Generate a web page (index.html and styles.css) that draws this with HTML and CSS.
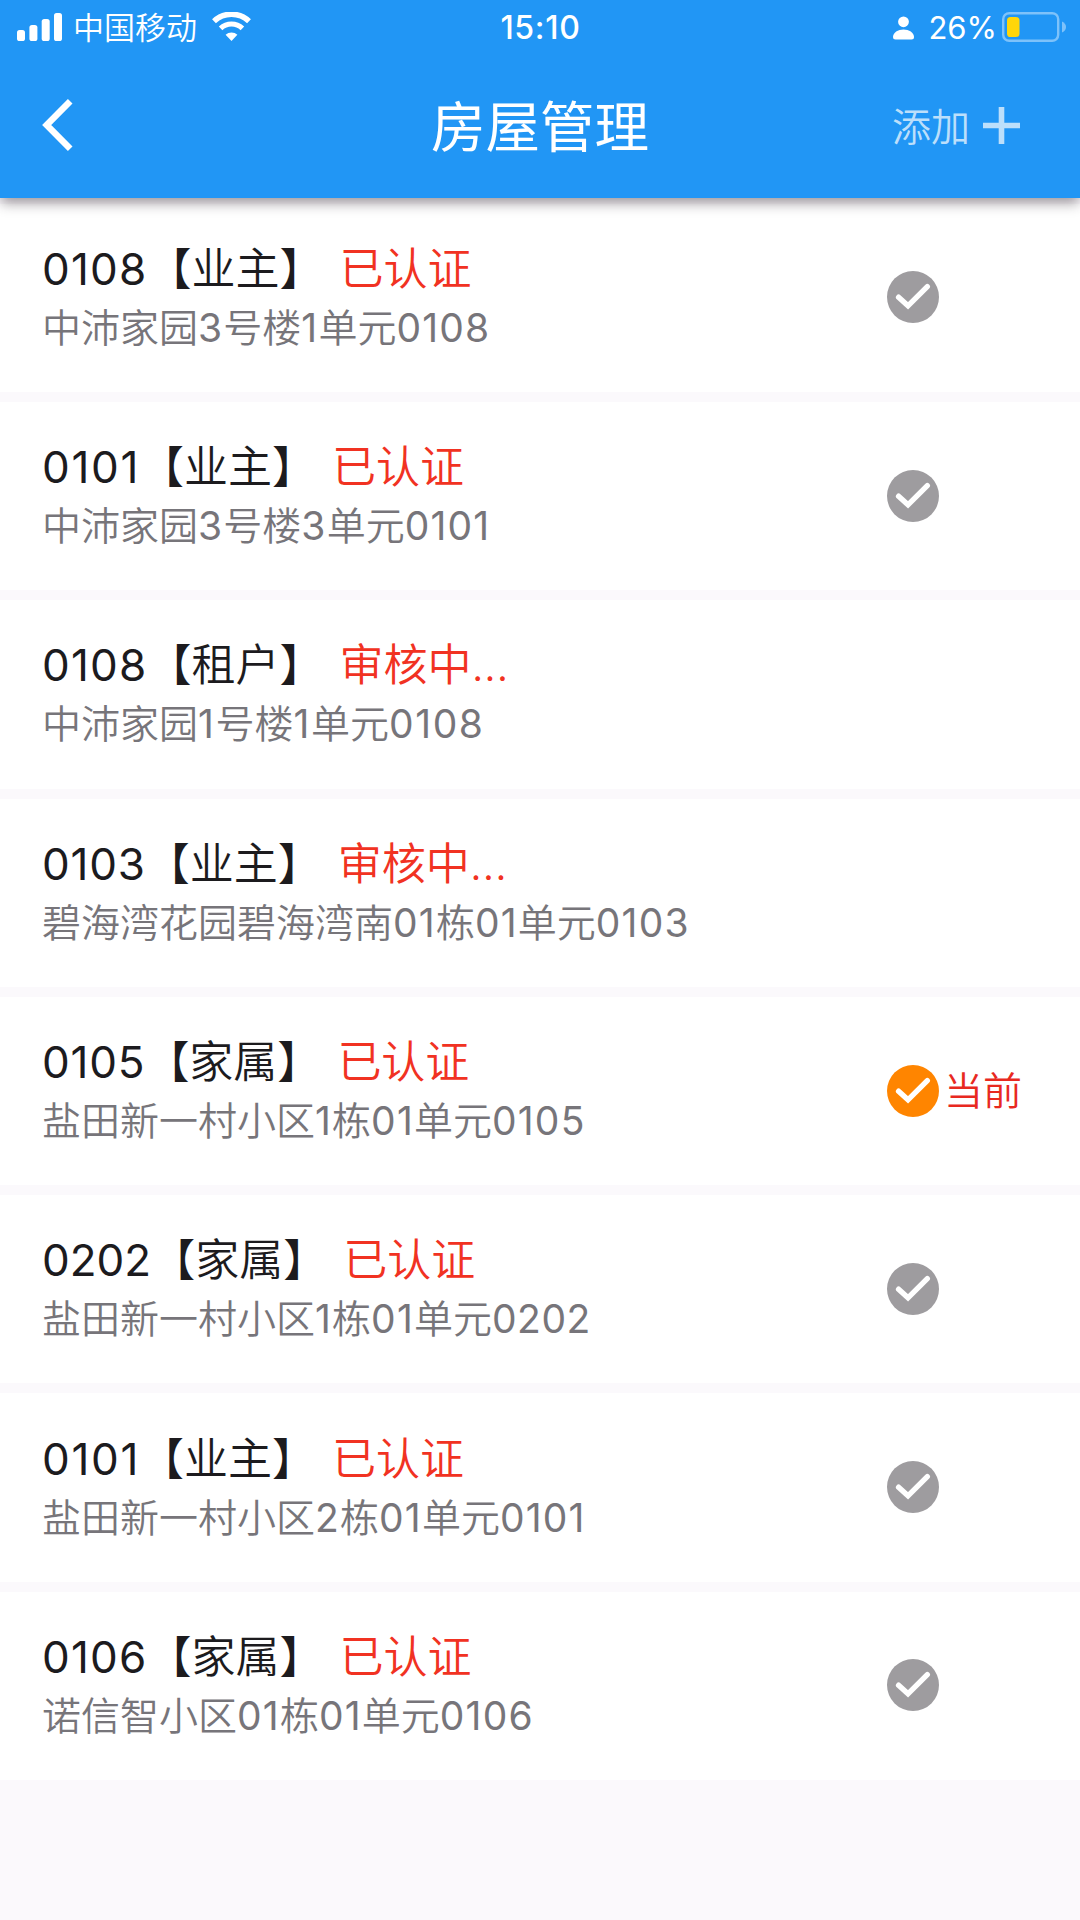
FILE: index.html
```html
<!DOCTYPE html>
<html lang="zh-CN">
<head>
<meta charset="utf-8">
<title>房屋管理</title>
<link rel="stylesheet" href="styles.css">
</head>
<body>
<svg class="defs" width="0" height="0" aria-hidden="true">
  <symbol id="check" viewBox="0 0 52 52">
    <circle cx="26" cy="26" r="26" fill="currentColor"/>
    <path d="M11.600 26.200 21 34.800 40.300 15.600" fill="none" stroke="#fff" stroke-width="5.400" stroke-linecap="round" stroke-linejoin="miter"/>
  </symbol>
</svg>
<header class="header">
  <div class="statusbar">
    <div class="network">
      <svg class="signal" width="45" height="28" viewBox="0 0 45 28" fill="#fff">
        <rect x="0" y="17" width="8" height="11" rx="2.6"/>
        <rect x="12.4" y="12" width="8" height="16" rx="2.6"/>
        <rect x="24.7" y="6" width="8" height="22" rx="2.6"/>
        <rect x="37" y="0" width="8" height="28" rx="2.6"/>
      </svg>
      <span class="carrier">中国移动</span>
      <svg class="wifi" width="39" height="29" viewBox="0 0 39 29">
        <path d="M2 9.2A25.5 25.5 0 0 1 37 9.2" fill="none" stroke="#fff" stroke-width="5.6"/>
        <path d="M8.6 16.3A16 16 0 0 1 30.4 16.3" fill="none" stroke="#fff" stroke-width="5.2"/>
        <path d="M13.6 22.8A8.6 8.6 0 0 1 25.4 22.8L19.5 29Z" fill="#fff"/>
      </svg>
    </div>
    <span class="clock">15:10</span>
    <div class="power">
      <svg class="person" width="21" height="24" viewBox="0 0 21 24" fill="#fff">
        <circle cx="10.5" cy="5.8" r="5.4"/>
        <path d="M0 21C0 16.500 5 13.500 10.500 13.500S21 16.500 21 21Q21 23.500 18.500 23.500H2.500Q0 23.500 0 21Z"/>
      </svg>
      <span class="percent">26%</span>
      <svg class="battery" width="64" height="30" viewBox="0 0 64 30">
        <rect x="1.200" y="1.200" width="55" height="27.600" rx="6" fill="none" stroke="#7ec2fa" stroke-width="2.400"/>
        <rect x="5" y="5" width="12.500" height="20" rx="3.600" fill="#ffd60a"/>
        <path d="M60 9.500Q64 11.500 64 15T60 20.500Z" fill="#7ec2fa"/>
      </svg>
    </div>
  </div>
  <nav class="navbar">
    <svg class="back" width="31" height="52" viewBox="0 0 31 52"><path d="M28.200 2.300 4.700 26 28.200 49.700" fill="none" stroke="#fff" stroke-width="6.500"/></svg>
    <h1 class="title">房屋管理</h1>
    <div class="add">
      <span>添加</span>
      <svg width="37" height="37" viewBox="0 0 37 37"><path d="M18.500 0V37M0 18.500H37" stroke="#bcdffb" stroke-width="5.600"/></svg>
    </div>
  </nav>
</header>
<main class="list">
  <section class="card">
    <div class="info"><p class="house"><span class="number">0108</span><span class="role">【业主】</span><span class="state">已认证</span></p><p class="address">中沛家园<i>3</i>号楼<i>1</i>单元<i>0108</i></p></div>
    <div class="pick"><svg class="check"><use href="#check"/></svg></div>
  </section>
  <section class="card">
    <div class="info"><p class="house"><span class="number loose">0101</span><span class="role">【业主】</span><span class="state">已认证</span></p><p class="address">中沛家园<i>3</i>号楼<i>3</i>单元<i>0101</i></p></div>
    <div class="pick"><svg class="check"><use href="#check"/></svg></div>
  </section>
  <section class="card">
    <div class="info"><p class="house"><span class="number">0108</span><span class="role">【租户】</span><span class="state">审核中...</span></p><p class="address wide">中沛家园<i>1</i>号楼<i>1</i>单元<i>0108</i></p></div>
  </section>
  <section class="card">
    <div class="info"><p class="house"><span class="number snug">0103</span><span class="role">【业主】</span><span class="state">审核中...</span></p><p class="address">碧海湾花园碧海湾南<i>01</i>栋<i>01</i>单元<i>0103</i></p></div>
  </section>
  <section class="card">
    <div class="info"><p class="house"><span class="number snug">0105</span><span class="role">【家属】</span><span class="state">已认证</span></p><p class="address">盐田新一村小区<i>1</i>栋<i>01</i>单元<i>0105</i></p></div>
    <div class="pick current"><svg class="check"><use href="#check"/></svg><span>当前</span></div>
  </section>
  <section class="card">
    <div class="info"><p class="house"><span class="number tight">0202</span><span class="role">【家属】</span><span class="state">已认证</span></p><p class="address">盐田新一村小区<i>1</i>栋<i>01</i>单元<i class="tight">0202</i></p></div>
    <div class="pick"><svg class="check"><use href="#check"/></svg></div>
  </section>
  <section class="card">
    <div class="info"><p class="house"><span class="number loose">0101</span><span class="role">【业主】</span><span class="state">已认证</span></p><p class="address">盐田新一村小区<i>2</i>栋<i>01</i>单元<i>0101</i></p></div>
    <div class="pick"><svg class="check"><use href="#check"/></svg></div>
  </section>
  <section class="card">
    <div class="info"><p class="house"><span class="number">0106</span><span class="role">【家属】</span><span class="state">已认证</span></p><p class="address">诺信智小区<i>01</i>栋<i>01</i>单元<i>0106</i></p></div>
    <div class="pick"><svg class="check"><use href="#check"/></svg></div>
  </section>
</main>
</body>
</html>
```
FILE: styles.css
```css
* { box-sizing: border-box; }
html, body { height: 100%; }
body {
  margin: 0;
  background: #fbf9fc;
  font-family: Inter, "Noto Sans CJK SC", sans-serif;
  color: #1c1b1e;
  overflow: hidden;
}
h1, p { margin: 0; font-weight: 400; }
i { font-style: normal; }
svg { display: block; flex: none; }
.defs { position: absolute; }

.header {
  position: relative;
  height: 198px;
  background: #2196f5;
  color: #fff;
  box-shadow: 0 6px 12px -1px rgba(40, 30, 40, .45);
}
.statusbar {
  display: grid;
  grid-template-columns: 1fr auto 1fr;
  height: 54px;
  padding: 0 14px 0 17px;
}
.network, .power { display: flex; align-items: center; }
.carrier { margin-left: 11px; font-size: 31px; font-weight: 350; line-height: 54px; padding-top: 1px; }
.wifi { margin: -3px 0 0 15px; }
.signal { margin-top: -2px; }
.clock { font-size: 32px; font-weight: 500; line-height: 55px; letter-spacing: .7px; margin-left: -2px; }
.power { justify-content: flex-end; }
.percent { margin: 0 5px 0 14px; font-size: 31px; line-height: 55px; }
.person { margin-top: 1px; }
.battery { margin: -2px 0 0 0; }
.navbar {
  display: grid;
  grid-template-columns: 1fr auto 1fr;
  align-items: center;
  height: 144px;
  padding: 0 60px 0 42px;
}
.back { margin-top: -2px; }
.title { font-size: 54.5px; line-height: 80px; margin-top: 1px; margin-left: 18px; }
.add { display: flex; justify-content: flex-end; align-items: center; gap: 13px; margin-top: -2px; color: #bcdffb; font-size: 39px; font-weight: 350; }
.add span { margin-top: -2px; }

.list { display: grid; gap: 10px; padding-top: 5.7px; }
.card {
  display: grid;
  grid-template-columns: 845px 1fr;
  align-items: center;
  height: 188.3px;
  padding-left: 42px;
  background: #fff;
}
.house { display: flex; padding-top: 1px; font-size: 44px; font-weight: 350; line-height: 60px; margin-bottom: -1px; white-space: nowrap; }
.number { font-weight: 400; letter-spacing: 1.2px; }
.number.snug { letter-spacing: .8px; }
.number.loose { letter-spacing: 1.7px; }
.number.tight { letter-spacing: 0; }
.state { margin-left: 16px; color: #f13222; }
.address { font-size: 39px; font-weight: 350; line-height: 60px; color: #77757a; white-space: nowrap; }
.address i { font-weight: 370; letter-spacing: 1.2px; }
.address.wide i { letter-spacing: 1.6px; }
.address i.tight { letter-spacing: .5px; }
.pick { display: flex; align-items: center; gap: 7px; margin-top: -1px; color: #9e9c9f; }
.check { width: 52px; height: 52px; }
.current { color: #ff8500; }
.current span { margin-left: -2px; color: #e8291f; font-size: 39px; font-weight: 350; line-height: 52px; }
```
